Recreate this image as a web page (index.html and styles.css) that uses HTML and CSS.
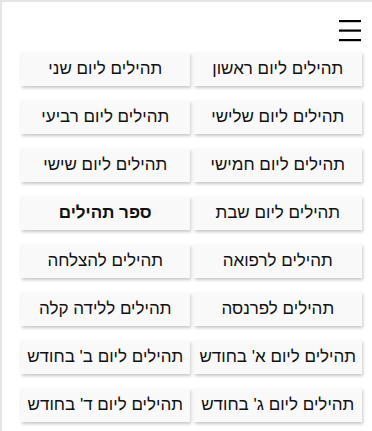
FILE: index.html
```html
<!DOCTYPE html>
<html lang="he" dir="rtl">
<head>
    <meta charset="UTF-8">
    <meta name="viewport" content="width=device-width, initial-scale=1.0">
    <title>תהילים</title>
    <link rel="stylesheet" href="styles.css">
</head>
<body>
<div id="page">
    <div id="top-bar">
        <button id="menu-btn" aria-label="תפריט">
            <svg width="22" height="22" viewBox="0 0 22 22">
                <rect x="0" y="0" width="22" height="2.2" fill="#000"/>
                <rect x="0" y="9.5" width="22" height="2.2" fill="#000"/>
                <rect x="0" y="19" width="22" height="2.2" fill="#000"/>
            </svg>
        </button>
    </div>
    <div id="menu-grid">
        <a class="menu-item" href="#">תהילים ליום ראשון</a>
        <a class="menu-item" href="#">תהילים ליום שני</a>
        <a class="menu-item" href="#">תהילים ליום שלישי</a>
        <a class="menu-item" href="#">תהילים ליום רביעי</a>
        <a class="menu-item" href="#">תהילים ליום חמישי</a>
        <a class="menu-item" href="#">תהילים ליום שישי</a>
        <a class="menu-item" href="#">תהילים ליום שבת</a>
        <a class="menu-item bold" href="#">ספר תהילים</a>
        <a class="menu-item" href="#">תהילים לרפואה</a>
        <a class="menu-item" href="#">תהילים להצלחה</a>
        <a class="menu-item" href="#">תהילים לפרנסה</a>
        <a class="menu-item" href="#">תהילים ללידה קלה</a>
        <a class="menu-item" href="#">תהילים ליום א' בחודש</a>
        <a class="menu-item" href="#">תהילים ליום ב' בחודש</a>
        <a class="menu-item" href="#">תהילים ליום ג' בחודש</a>
        <a class="menu-item" href="#">תהילים ליום ד' בחודש</a>
    </div>
</div>
</body>
</html>
```

FILE: styles.css
```css
body {
    margin: 0;
    font-family: "Liberation Sans", "DejaVu Sans", sans-serif;
    background: #fff;
    overflow: hidden;
}
#page {
    border-top: 2px solid #e6e6e6;
    border-left: 2px solid #e6e6e6;
    height: 100vh;
    box-sizing: border-box;
    padding: 0 10px 0 19px; /* ימין 10, שמאל 19 */
}
#top-bar {
    display: flex;
    justify-content: flex-start;
    padding: 18px 1px 0 0;
    height: 32px;
}
#menu-btn {
    border: none;
    background: none;
    padding: 0;
    width: 22px;
    height: 22px;
    cursor: pointer;
}
#menu-btn svg {
    display: block;
}
#menu-grid {
    display: grid;
    grid-template-columns: 1fr 1fr;
    column-gap: 4px;
    row-gap: 14px;
}
.menu-item {
    display: flex;
    justify-content: center;
    align-items: center;
    height: 34px;
    background-color: #f9f9f9;
    box-shadow: 1px 2px 3px rgba(0, 0, 0, 0.22);
    color: #111;
    text-decoration: none;
    font-size: 17px;
}
.bold {
    font-weight: bold;
}
```
